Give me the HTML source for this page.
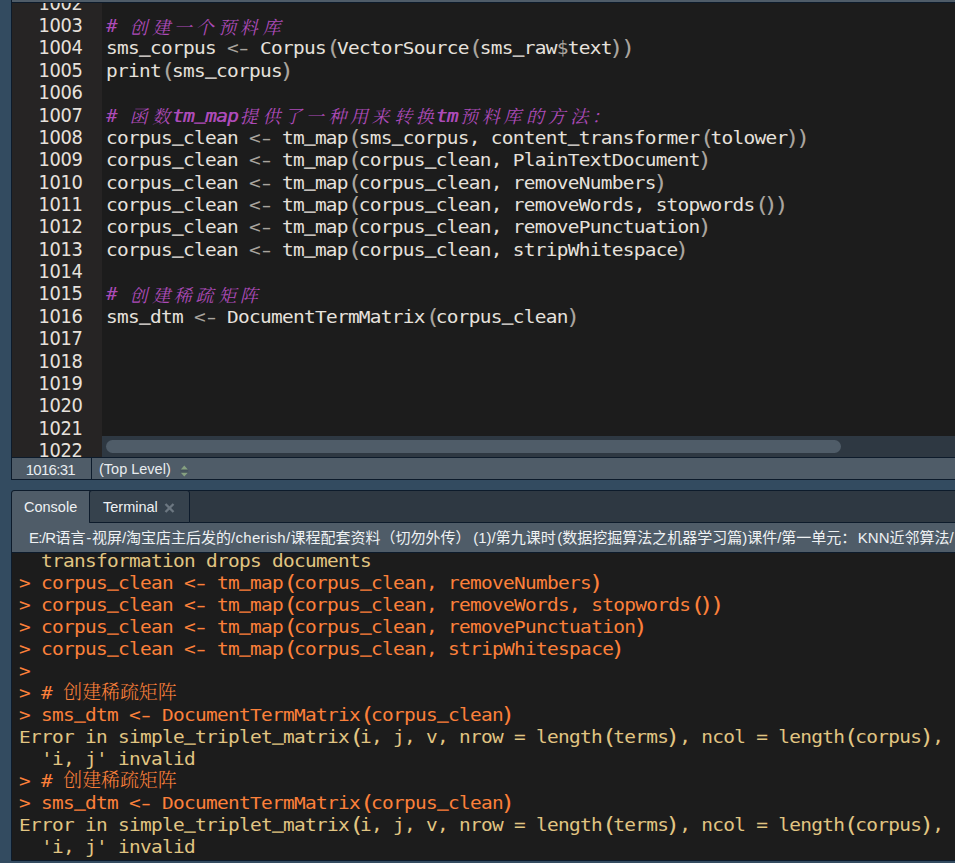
<!DOCTYPE html>
<html lang="zh">
<head>
<meta charset="utf-8">
<title>RStudio</title>
<style>
html,body{margin:0;padding:0;background:#334b60;}
body{width:955px;height:863px;overflow:hidden;background:#334b60;position:relative;font-family:"Liberation Sans","Noto Sans CJK SC",sans-serif;}
.abs{position:absolute;}
#frame1{left:11px;top:-1px;width:960px;height:479px;border:1px solid #0d1b2b;box-sizing:content-box;}
#topbar{left:12px;top:0;width:943px;height:2px;background:#4f5c68;}
#topline{left:12px;top:2px;width:943px;height:1px;background:#0d1b2b;}
#gutter{left:12px;top:3px;width:90px;height:454px;background:#262424;overflow:hidden;}
#code{left:102px;top:3px;width:853px;height:433px;background:#1c1c1c;overflow:hidden;}
#hscroll{left:102px;top:436px;width:853px;height:21px;background:#2e3842;}
#thumb{left:4px;top:4px;width:735px;height:13px;border-radius:7px;background:#4f5c68;}
.mono{font-family:"DejaVu Sans Mono", "Liberation Mono", monospace;font-size:18px;letter-spacing:0.163px;line-height:22.37px;white-space:pre;font-variant-ligatures:none;}
#gl{left:0;top:-10.25px;width:70.6px;text-align:right;color:#e6e1dc;font-family:"DejaVu Sans","Liberation Sans",sans-serif;font-size:19.2px;letter-spacing:-0.38px;transform:scaleX(0.93);transform-origin:100% 0;}
.ln{height:22.37px;}
#cl{left:4.4px;top:-10.3px;color:#e6e1dc;letter-spacing:-0.661px;transform:scaleX(1.080);transform-origin:0 0;}
.l{height:22.37px;}
.op{color:#a9a49e;}
.C{display:inline-block;transform:scaleY(0.875);transform-origin:50% 17.6px;}
.p{display:inline-block;transform:scale(1.25,1.15);transform-origin:50% 11.6px;position:relative;}
.po{left:1.3px;}
.pc{left:-0.8px;}
.d{display:inline-block;transform:scaleX(1.45);}
.u{position:relative;top:-2.6px;text-shadow:0 0.7px 0 currentColor,0 1.2px 0 currentColor;}
.cm{color:#ac4bb8;font-style:italic;}
.cm b{font-weight:normal;text-shadow:0.5px 0 0 currentColor;}
.zh{font-family:"Liberation Serif","Noto Serif CJK SC",serif;font-size:18px;letter-spacing:0;font-style:italic;}
.zh i{display:inline-block;width:20.370px;text-align:center;font-style:italic;position:relative;top:1.6px;transform:scaleX(0.9259);}
#sline1{left:12px;top:457px;width:943px;height:1px;background:#0d1b2b;}
#status{left:12px;top:458px;width:943px;height:21px;background:#4f5c68;color:#e8ecef;font-size:14.5px;line-height:23px;}
#sline2{left:12px;top:479px;width:943px;height:1px;background:#0d1b2b;}
#ssep{left:79px;top:0;width:1px;height:21px;background:#0d1b2b;}
#pos{left:0;top:0;width:79px;text-align:center;font-size:15px;letter-spacing:-0.7px;text-indent:-2.4px;}
#scope{left:87px;top:0;}
#frame2{left:11px;top:490px;width:960px;height:369px;border:1px solid #0d1b2b;border-radius:3px 0 0 0;background:#2e3842;box-sizing:content-box;}
#tabbar{left:12px;top:491px;width:943px;height:31px;background:#2e3842;border-radius:3px 0 0 0;}
#tab1{left:12px;top:491px;width:77px;height:32px;background:#4f5c68;border-radius:3px 0 0 0;color:#eef1f3;font-size:14.5px;line-height:33px;}
#tab2{left:89px;top:490px;width:99px;height:31px;background:#36424d;border:1px solid #0d1b2b;border-radius:3px 3px 0 0;color:#eef1f3;font-size:14.5px;line-height:33px;box-sizing:content-box;}
#tabline{left:190px;top:522px;width:765px;height:1px;background:#0d1b2b;}
#pathbar{left:12px;top:523px;width:943px;height:29px;background:#4f5c68;color:#eef1f3;font-size:15px;line-height:29px;white-space:pre;overflow:hidden;text-spacing-trim:space-all;}
#pline{left:12px;top:552px;width:943px;height:1px;background:#0d1b2b;}
#console{left:12px;top:553px;width:943px;height:307px;background:#1c1c1c;overflow:hidden;}
#cons{left:7.2px;top:-3.4px;letter-spacing:-0.650px;transform:scaleX(1.080);transform-origin:0 0;}
.cl{height:22px;line-height:22px;}
.cl.in{color:#fc803a;}
.cl.err{color:#e1c582;}
.czh{font-family:"Liberation Serif","Noto Serif CJK SC",serif;font-size:18.9px;letter-spacing:0;font-weight:300;position:relative;top:0.8px;display:inline-block;height:22px;vertical-align:top;transform:scaleX(0.9259);transform-origin:0 50%;margin-right:-8.40px;}
#cbline{left:12px;top:860px;width:943px;height:1px;background:#0d1b2b;}
</style>
</head>
<body>
<div id="frame1" class="abs"></div>
<div id="topbar" class="abs"></div>
<div id="topline" class="abs"></div>
<div id="gutter" class="abs"><div id="gl" class="abs mono"><div class="ln">1002</div><div class="ln">1003</div><div class="ln">1004</div><div class="ln">1005</div><div class="ln">1006</div><div class="ln">1007</div><div class="ln">1008</div><div class="ln">1009</div><div class="ln">1010</div><div class="ln">1011</div><div class="ln">1012</div><div class="ln">1013</div><div class="ln">1014</div><div class="ln">1015</div><div class="ln">1016</div><div class="ln">1017</div><div class="ln">1018</div><div class="ln">1019</div><div class="ln">1020</div><div class="ln">1021</div><div class="ln">1022</div></div></div>
<div id="code" class="abs"><div id="cl" class="abs mono"><div class="l"></div><div class="l"><span class="cm"># <span class="zh"><i>创</i><i>建</i><i>一</i><i>个</i><i>预</i><i>料</i><i>库</i></span></span></div><div class="l">sms<span class="u">_</span>corpus <span class="op">&lt;<span class="d">-</span></span> <span class="C">C</span>orpus<span class="op"><span class="p po">(</span></span><span class="C">V</span>ector<span class="C">S</span>ource<span class="op"><span class="p po">(</span></span>sms<span class="u">_</span>raw<span class="op">$</span>text<span class="op"><span class="p pc">)</span><span class="p pc">)</span></span></div><div class="l">print<span class="op"><span class="p po">(</span></span>sms<span class="u">_</span>corpus<span class="op"><span class="p pc">)</span></span></div><div class="l"></div><div class="l"><span class="cm"># <span class="zh"><i>函</i><i>数</i></span><b>tm<span class="u">_</span>map</b><span class="zh"><i>提</i><i>供</i><i>了</i><i>一</i><i>种</i><i>用</i><i>来</i><i>转</i><i>换</i></span><b>tm</b><span class="zh"><i>预</i><i>料</i><i>库</i><i>的</i><i>方</i><i>法</i><i>：</i></span></span></div><div class="l">corpus<span class="u">_</span>clean <span class="op">&lt;<span class="d">-</span></span> tm<span class="u">_</span>map<span class="op"><span class="p po">(</span></span>sms<span class="u">_</span>corpus, content<span class="u">_</span>transformer<span class="op"><span class="p po">(</span></span>tolower<span class="op"><span class="p pc">)</span><span class="p pc">)</span></span></div><div class="l">corpus<span class="u">_</span>clean <span class="op">&lt;<span class="d">-</span></span> tm<span class="u">_</span>map<span class="op"><span class="p po">(</span></span>corpus<span class="u">_</span>clean, <span class="C">P</span>lain<span class="C">T</span>ext<span class="C">D</span>ocument<span class="op"><span class="p pc">)</span></span></div><div class="l">corpus<span class="u">_</span>clean <span class="op">&lt;<span class="d">-</span></span> tm<span class="u">_</span>map<span class="op"><span class="p po">(</span></span>corpus<span class="u">_</span>clean, remove<span class="C">N</span>umbers<span class="op"><span class="p pc">)</span></span></div><div class="l">corpus<span class="u">_</span>clean <span class="op">&lt;<span class="d">-</span></span> tm<span class="u">_</span>map<span class="op"><span class="p po">(</span></span>corpus<span class="u">_</span>clean, remove<span class="C">W</span>ords, stopwords<span class="op"><span class="p po">(</span><span class="p pc">)</span><span class="p pc">)</span></span></div><div class="l">corpus<span class="u">_</span>clean <span class="op">&lt;<span class="d">-</span></span> tm<span class="u">_</span>map<span class="op"><span class="p po">(</span></span>corpus<span class="u">_</span>clean, remove<span class="C">P</span>unctuation<span class="op"><span class="p pc">)</span></span></div><div class="l">corpus<span class="u">_</span>clean <span class="op">&lt;<span class="d">-</span></span> tm<span class="u">_</span>map<span class="op"><span class="p po">(</span></span>corpus<span class="u">_</span>clean, strip<span class="C">W</span>hitespace<span class="op"><span class="p pc">)</span></span></div><div class="l"></div><div class="l"><span class="cm"># <span class="zh"><i>创</i><i>建</i><i>稀</i><i>疏</i><i>矩</i><i>阵</i></span></span></div><div class="l">sms<span class="u">_</span>dtm <span class="op">&lt;<span class="d">-</span></span> <span class="C">D</span>ocument<span class="C">T</span>erm<span class="C">M</span>atrix<span class="op"><span class="p po">(</span></span>corpus<span class="u">_</span>clean<span class="op"><span class="p pc">)</span></span></div><div class="l"></div><div class="l"></div><div class="l"></div><div class="l"></div><div class="l"></div><div class="l"></div></div></div>
<div id="hscroll" class="abs"><div id="thumb" class="abs"></div></div>
<div id="sline1" class="abs"></div>
<div id="status" class="abs">
<div id="pos" class="abs">1016:31</div>
<div id="ssep" class="abs"></div>
<div id="scope" class="abs">(Top Level)</div>
<svg class="abs" style="left:168px;top:7px" width="9" height="12" viewBox="0 0 9 12"><path d="M4.3 0.6 L8 4.7 H0.6 Z M0.6 7.5 H8 L4.3 11.6 Z" fill="#86a081"/><path d="M0.4 5.1 H8.2 M0.4 7.1 H8.2" stroke="#37434d" stroke-width="0.7"/></svg>
</div>
<div id="sline2" class="abs"></div>
<div id="frame2" class="abs"></div>
<div id="tab2" class="abs"><span class="abs" style="left:13px;top:0">Terminal</span>
<svg class="abs" style="left:74px;top:12.3px" width="11" height="10" viewBox="0 0 11 10"><path d="M1.5 1 L9.5 9 M9.5 1 L1.5 9" stroke="#6c7781" stroke-width="2.3" fill="none"/></svg>
</div>
<div id="tabline" class="abs"></div>
<div id="pathbar" class="abs"><span class="abs" style="left:17px;top:0"><span style="letter-spacing:-0.7px">E:/R</span>语言<span style="margin:0 0.75px">-</span>视屏/淘宝店主后发的<span style="letter-spacing:0.3px">/cherish/</span>课程配套资料（切勿外传）<span style="margin-left:-1.5px"> (1)</span>/第九课时<span style="margin-left:1.5px">(</span>数据挖掘算法之机器学习篇)课件/第一单元<span style="margin-right:1.5px">：</span>KNN近邻算法/</span></div>
<div id="tab1" class="abs"><span class="abs" style="left:12px;top:0">Console</span></div>
<div id="pline" class="abs"></div>
<div id="console" class="abs"><div id="cons" class="abs mono"><div class="cl err">  transformation drops documents</div><div class="cl in">&gt; corpus<span class="u">_</span>clean &lt;<span class="d">-</span> tm<span class="u">_</span>map<span class="p po">(</span>corpus<span class="u">_</span>clean, remove<span class="C">N</span>umbers<span class="p pc">)</span></div><div class="cl in">&gt; corpus<span class="u">_</span>clean &lt;<span class="d">-</span> tm<span class="u">_</span>map<span class="p po">(</span>corpus<span class="u">_</span>clean, remove<span class="C">W</span>ords, stopwords<span class="p po">(</span><span class="p pc">)</span><span class="p pc">)</span></div><div class="cl in">&gt; corpus<span class="u">_</span>clean &lt;<span class="d">-</span> tm<span class="u">_</span>map<span class="p po">(</span>corpus<span class="u">_</span>clean, remove<span class="C">P</span>unctuation<span class="p pc">)</span></div><div class="cl in">&gt; corpus<span class="u">_</span>clean &lt;<span class="d">-</span> tm<span class="u">_</span>map<span class="p po">(</span>corpus<span class="u">_</span>clean, strip<span class="C">W</span>hitespace<span class="p pc">)</span></div><div class="cl in">&gt; </div><div class="cl in">&gt; # <span class="czh">创建稀疏矩阵</span></div><div class="cl in">&gt; sms<span class="u">_</span>dtm &lt;<span class="d">-</span> <span class="C">D</span>ocument<span class="C">T</span>erm<span class="C">M</span>atrix<span class="p po">(</span>corpus<span class="u">_</span>clean<span class="p pc">)</span></div><div class="cl err"><span class="C">E</span>rror in simple<span class="u">_</span>triplet<span class="u">_</span>matrix<span class="p po">(</span>i, j, v, nrow = length<span class="p po">(</span>terms<span class="p pc">)</span>, ncol = length<span class="p po">(</span>corpus<span class="p pc">)</span>, :</div><div class="cl err">  'i, j' invalid</div><div class="cl in">&gt; # <span class="czh">创建稀疏矩阵</span></div><div class="cl in">&gt; sms<span class="u">_</span>dtm &lt;<span class="d">-</span> <span class="C">D</span>ocument<span class="C">T</span>erm<span class="C">M</span>atrix<span class="p po">(</span>corpus<span class="u">_</span>clean<span class="p pc">)</span></div><div class="cl err"><span class="C">E</span>rror in simple<span class="u">_</span>triplet<span class="u">_</span>matrix<span class="p po">(</span>i, j, v, nrow = length<span class="p po">(</span>terms<span class="p pc">)</span>, ncol = length<span class="p po">(</span>corpus<span class="p pc">)</span>, :</div><div class="cl err">  'i, j' invalid</div></div></div>
<div id="cbline" class="abs"></div>
</body>
</html>
